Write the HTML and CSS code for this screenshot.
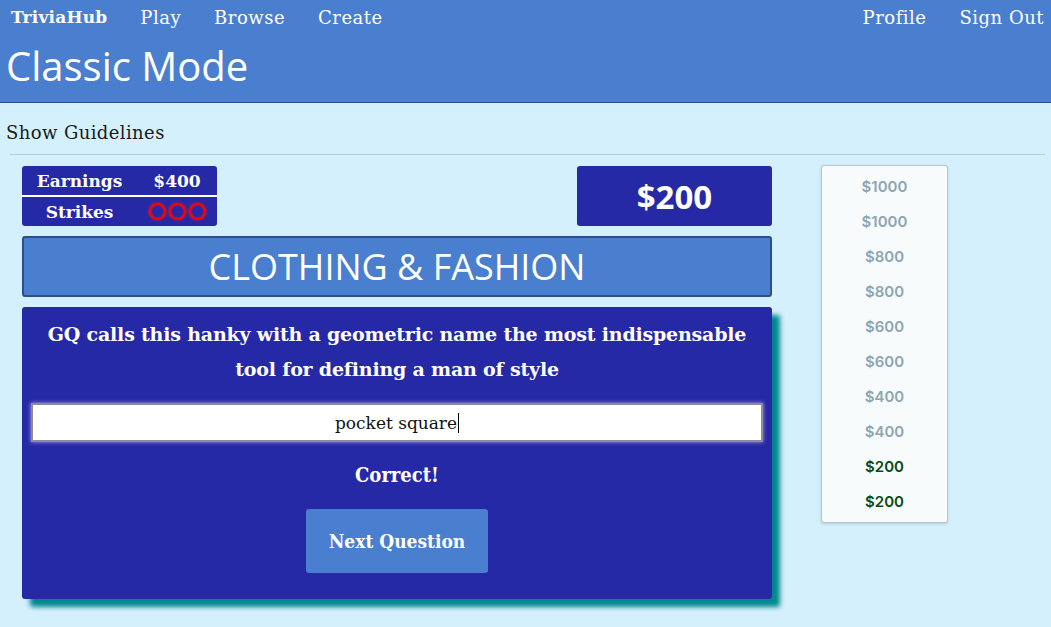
FILE: index.html
```html
<!DOCTYPE html>
<html lang="en">
<head>
<meta charset="utf-8">
<title>Classic Mode - TriviaHub</title>
<link rel="stylesheet" href="styles.css">
</head>
<body>
<header class="topbar">
  <nav class="nav">
    <div class="nav-group">
      <a class="nav-link brand" href="#">TriviaHub</a>
      <a class="nav-link" href="#">Play</a>
      <a class="nav-link" href="#">Browse</a>
      <a class="nav-link" href="#">Create</a>
    </div>
    <div class="nav-group">
      <a class="nav-link" href="#">Profile</a>
      <a class="nav-link" href="#">Sign Out</a>
    </div>
  </nav>
  <h1 class="page-title">Classic Mode</h1>
</header>
<main class="content">
  <div class="guidelines">Show Guidelines</div>
  <hr class="divider">
  <div class="game">
    <section class="board">
      <div class="status-row">
        <div class="stats">
          <div class="stat-row">
            <span class="stat-label">Earnings</span>
            <span class="stat-value">$400</span>
          </div>
          <div class="stat-row stat-row-last">
            <span class="stat-label">Strikes</span>
            <span class="stat-value strikes">
              <span class="strike"></span><span class="strike"></span><span class="strike"></span>
            </span>
          </div>
        </div>
        <div class="value-box">$200</div>
      </div>
      <div class="category">CLOTHING &amp; FASHION</div>
      <div class="question-card">
        <p class="question">GQ calls this hanky with a geometric name the most indispensable tool for defining a man of style</p>
        <div class="answer"><span class="answer-text">pocket square</span><span class="caret"></span></div>
        <p class="result">Correct!</p>
        <button class="next-btn" type="button">Next Question</button>
      </div>
    </section>
    <aside class="ladder">
      <div class="rung">$1000</div>
      <div class="rung">$1000</div>
      <div class="rung">$800</div>
      <div class="rung">$800</div>
      <div class="rung">$600</div>
      <div class="rung">$600</div>
      <div class="rung">$400</div>
      <div class="rung">$400</div>
      <div class="rung rung-won">$200</div>
      <div class="rung rung-won">$200</div>
    </aside>
  </div>
</main>
</body>
</html>
```
FILE: styles.css
```css
* { box-sizing: border-box; }

html, body {
  margin: 0;
  padding: 0;
}

body {
  background: #d4f0fc;
  font-family: "DejaVu Serif", "Liberation Serif", serif;
  color: #1a1a1a;
  min-height: 627px;
}

.topbar {
  background: #4a7ecf;
  border-bottom: 1px solid #2b4f86;
  height: 103px;
}

.nav {
  display: flex;
  justify-content: space-between;
  align-items: center;
  height: 34px;
  padding: 0 7px 0 11px;
}

.nav-group {
  display: flex;
  gap: 33px;
}

.nav-link {
  color: #ffffff;
  text-decoration: none;
  font-size: 18px;
  letter-spacing: 0.5px;
}

.brand {
  font-weight: bold;
  font-size: 17px;
  letter-spacing: 0.2px;
}

.page-title {
  margin: 0;
  padding: 0 6px;
  font-family: "Open Sans", "Noto Sans", sans-serif;
  font-weight: 500;
  font-size: 40px;
  line-height: 64px;
  color: #ffffff;
}

.content {
  padding: 0 6px;
}

.guidelines {
  font-size: 18px;
  letter-spacing: 0.4px;
  padding-top: 18px;
  line-height: 24px;
  height: 51px;
}

.divider {
  margin: 0 0 0 4px;
  border: 0;
  border-top: 1px solid #bccad2;
}

.game {
  display: flex;
  align-items: flex-start;
  gap: 49px;
  padding: 11px 0 0 16px;
}

.board {
  width: 750px;
  display: flex;
  flex-direction: column;
  gap: 10px;
}

.status-row {
  display: flex;
  justify-content: space-between;
}

.stats {
  width: 195px;
  height: 60px;
  background: #2629a5;
  border-radius: 3px;
  color: #ffffff;
  font-weight: bold;
  font-size: 17px;
  display: flex;
  flex-direction: column;
}

.stat-row {
  display: grid;
  grid-template-columns: 115px 80px;
  align-items: center;
  height: 31px;
  border-bottom: 2px solid #ffffff;
}

.stat-row-last {
  border-bottom: 0;
  height: 29px;
}

.stat-label, .stat-value {
  text-align: center;
}

.strikes {
  display: flex;
  justify-content: center;
  gap: 3px;
}

.strike {
  width: 17px;
  height: 17px;
  border-radius: 50%;
  border: 2px solid #ff0000;
  box-shadow: 0 0 3px #ff1a1a, inset 0 0 2px #ff1a1a;
}

.value-box {
  width: 195px;
  height: 60px;
  background: #2629a5;
  border-radius: 3px;
  color: #ffffff;
  font-family: "Open Sans", "Noto Sans", sans-serif;
  font-weight: bold;
  font-size: 33px;
  display: flex;
  align-items: center;
  justify-content: center;
}

.category {
  height: 61px;
  background: #4a7ecf;
  border: 2px solid #2b4f86;
  border-radius: 3px;
  color: #ffffff;
  font-family: "Open Sans", "Noto Sans", sans-serif;
  font-weight: 400;
  font-size: 36px;
  display: flex;
  align-items: center;
  justify-content: center;
}

.question-card {
  height: 292px;
  background: #2629a5;
  border-radius: 3px;
  box-shadow: 8px 8px 5px #00888e;
  padding: 10px 9px 0;
  display: flex;
  flex-direction: column;
  align-items: center;
  color: #ffffff;
}

.question {
  margin: 0;
  padding: 0 12px;
  font-weight: bold;
  font-size: 19px;
  letter-spacing: -0.2px;
  line-height: 35px;
  text-align: center;
}

.answer {
  margin-top: 16px;
  width: 100%;
  height: 39px;
  background: #ffffff;
  border: 2px solid #8c8c9c;
  box-shadow: 0 0 4px #a8a8e0;
  display: flex;
  align-items: center;
  justify-content: center;
  color: #111111;
  font-size: 17px;
}

.caret {
  display: inline-block;
  width: 1px;
  height: 20px;
  background: #000000;
  margin-left: 1px;
}

.result {
  margin: 19px 0 0;
  font-weight: bold;
  font-size: 20px;
  font-stretch: condensed;
  line-height: 28px;
}

.next-btn {
  margin-top: 20px;
  width: 182px;
  height: 64px;
  background: #4a7ecf;
  border: 0;
  border-radius: 3px;
  color: #ffffff;
  font-family: "DejaVu Serif", "Liberation Serif", serif;
  font-weight: bold;
  font-size: 19px;
  font-stretch: condensed;
}

.ladder {
  width: 127px;
  margin-top: -1px;
  padding: 3px 0 3px;
  background: #f8fbfc;
  border: 1px solid #b6c4cc;
  border-radius: 3px;
  box-shadow: 0 1px 3px rgba(0, 0, 0, 0.15);
  display: flex;
  flex-direction: column;
}

.rung {
  height: 35px;
  line-height: 36px;
  text-align: center;
  font-family: "Inter", "Lato", sans-serif;
  font-weight: 600;
  font-size: 15px;
  color: #8ea5b3;
}

.rung-won {
  color: #0b4a12;
}
```
